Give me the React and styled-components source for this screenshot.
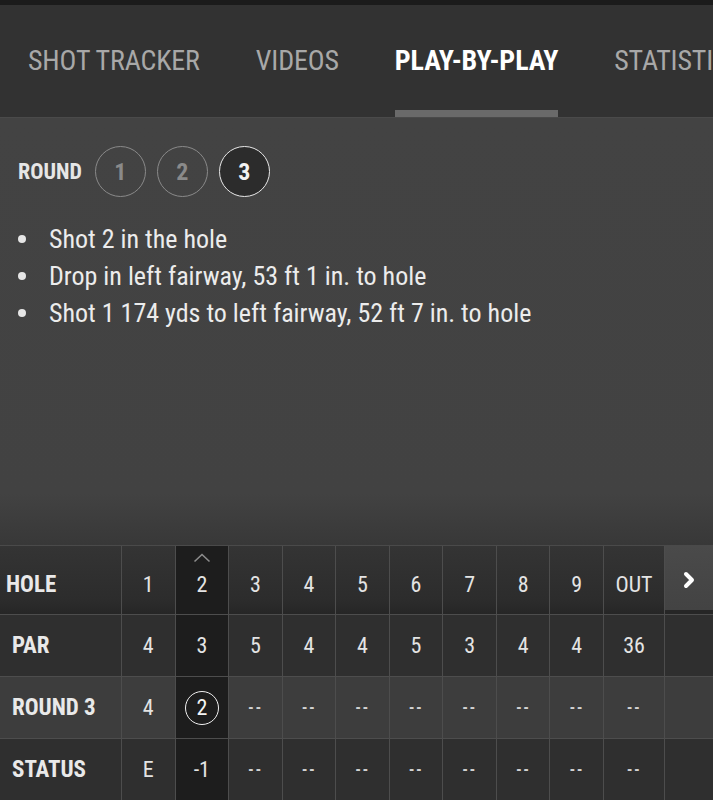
import React from 'react';
import styled, { createGlobalStyle } from 'styled-components';

const GlobalStyle = createGlobalStyle`
    body {
        margin: 0;
        background: #424242;
        font-family: "Roboto Condensed", Roboto, "Liberation Sans", sans-serif;
    }
`;

const Page = styled.div`
    width: 713px;
    height: 800px;
    display: flex;
    flex-direction: column;
    overflow: hidden;
`;

const TopStrip = styled.div`
    height: 5px;
    background: #1b1b1b;
`;

const TabBar = styled.div`
    height: 112px;
    background: #323232;
    display: flex;
    gap: 56px;
    padding-left: 28px;
    white-space: nowrap;
    overflow: hidden;
`;

const Tab = styled.div`
    position: relative;
    display: flex;
    align-items: center;
    flex-shrink: 0;
    padding-bottom: 2px;
    font-size: 28px;
    font-weight: ${props => props.$active ? 700 : 400};
    color: ${props => props.$active ? '#ffffff' : '#a8a8a8'};
    letter-spacing: -0.15px;

    &::after {
        content: '';
        display: ${props => props.$active ? 'block' : 'none'};
        position: absolute;
        left: 0;
        right: 0;
        bottom: 0;
        height: 7px;
        background: #6a6a6a;
    }
`;

const Content = styled.div`
    flex: 1;
    border-top: 1px solid #4a4a4a;
    background: linear-gradient(#434343 0%, #424242 88%, #383838 100%);
    padding: 28px 18px 0;
`;

const RoundRow = styled.div`
    display: flex;
    align-items: center;
    gap: 11px;
`;

const RoundLabel = styled.div`
    font-size: 22px;
    font-weight: 700;
    color: #e6e6e6;
    margin-right: 2px;
`;

const RoundButton = styled.div`
    width: 49px;
    height: 49px;
    border-radius: 50%;
    display: flex;
    align-items: center;
    justify-content: center;
    font-size: 24px;
    font-weight: 700;
    border: 1.5px solid ${props => props.$active ? '#e8e8e8' : '#8a8a8a'};
    color: ${props => props.$active ? '#f2f2f2' : '#8a8a8a'};
    background: ${props => props.$active ? '#2c2c2c' : 'transparent'};
`;

const ShotList = styled.ul`
    list-style: none;
    margin: 23px 0 0;
    padding: 0;
`;

const Shot = styled.li`
    display: flex;
    align-items: center;
    height: 37px;
    font-size: 26px;
    color: #ececec;

    &::before {
        content: '';
        width: 8px;
        height: 8px;
        border-radius: 50%;
        background: #e6e6e6;
        margin: 0 23px 0 0;
        flex-shrink: 0;
    }
`;

const Table = styled.div`
    display: grid;
    grid-template-columns: 121px repeat(9, 1fr) 60px 48px;
    grid-template-rows: 68px 61px 61px 61px;
    gap: 1px;
    background: #4d4d4d;
    border-top: 1px solid #4a4a4a;
`;

const rowBg = {
    head: 'linear-gradient(#343434, #2c2c2c 80%, #262626)',
    par: '#2f2f2f',
    round: '#3d3d3d',
    status: '#2f2f2f',
};

const Cell = styled.div`
    position: relative;
    display: flex;
    align-items: center;
    justify-content: ${props => props.$label ? 'flex-start' : 'center'};
    padding-left: ${props => props.$label ? (props.$indent ? '12px' : '6px') : '0'};
    padding-top: ${props => props.$head ? '8px' : '0'};
    background: ${props => props.$hl ? '#1d1d1d' : rowBg[props.$row]};
    color: ${props => props.$label ? '#e9e9e9' : props.$small ? '#d2d2d2' : '#e4e4e4'};
    font-size: ${props => props.$small ? '16px' : props.$label ? '23px' : '22px'};
    font-weight: ${props => props.$label || props.$small ? 700 : 400};
    letter-spacing: ${props => props.$small ? '1.5px' : '0'};
`;

const Caret = styled.svg`
    position: absolute;
    top: 7px;
    left: 50%;
    transform: translateX(-50%);
`;

const Circled = styled.div`
    width: 32px;
    height: 32px;
    border: 1.5px solid #f0f0f0;
    border-radius: 50%;
    display: flex;
    align-items: center;
    justify-content: center;
    color: #f4f4f4;
`;

const NextButton = styled.div`
    display: flex;
    align-items: center;
    justify-content: center;
    background: linear-gradient(#4a4a4a, #434343);
    border-bottom: 4px solid #262626;
    padding-top: 4px;
`;

const EmptyCell = styled.div`
    background: ${props => rowBg[props.$row]};
`;

const holes = ['1', '2', '3', '4', '5', '6', '7', '8', '9', 'OUT'];
const par = ['4', '3', '5', '4', '4', '5', '3', '4', '4', '36'];
const round3 = ['4', '2', '--', '--', '--', '--', '--', '--', '--', '--'];
const status = ['E', '-1', '--', '--', '--', '--', '--', '--', '--', '--'];

const shots = [
    'Shot 2 in the hole',
    'Drop in left fairway, 53 ft 1 in. to hole',
    'Shot 1 174 yds to left fairway, 52 ft 7 in. to hole',
];

const current = 1;

const DataRow = ({ row, label, values, indent }) => (
    <>
        <Cell $row={row} $label $indent={indent}>{label}</Cell>
        {values.map((v, i) => (
            <Cell key={i} $row={row} $hl={i === current} $small={v === '--'}>
                {row === 'round' && i === current ? <Circled>{v}</Circled> : v}
            </Cell>
        ))}
        <EmptyCell $row={row} />
    </>
);

export default function App() {
    return (
        <Page>
            <GlobalStyle />
            <TopStrip />
            <TabBar>
                <Tab>SHOT TRACKER</Tab>
                <Tab>VIDEOS</Tab>
                <Tab $active>PLAY-BY-PLAY</Tab>
                <Tab>STATISTICS</Tab>
            </TabBar>
            <Content>
                <RoundRow>
                    <RoundLabel>ROUND</RoundLabel>
                    <RoundButton>1</RoundButton>
                    <RoundButton>2</RoundButton>
                    <RoundButton $active>3</RoundButton>
                </RoundRow>
                <ShotList>
                    {shots.map(s => <Shot key={s}>{s}</Shot>)}
                </ShotList>
            </Content>
            <Table>
                <Cell $row="head" $label $head>HOLE</Cell>
                {holes.map((h, i) => (
                    <Cell key={h} $row="head" $head $hl={i === current}>
                        {i === current && (
                            <Caret width="18" height="10" viewBox="0 0 18 10">
                                <path d="M1.5 8.5 L9 1.5 L16.5 8.5" fill="none" stroke="#8c8c8c" strokeWidth="1.6" />
                            </Caret>
                        )}
                        {h}
                    </Cell>
                ))}
                <NextButton>
                    <svg width="14" height="20" viewBox="0 0 14 20">
                        <path d="M4 4 L10 10 L4 16" fill="none" stroke="#ffffff" strokeWidth="4" strokeLinecap="round" strokeLinejoin="round" />
                    </svg>
                </NextButton>
                <DataRow row="par" label="PAR" values={par} indent />
                <DataRow row="round" label="ROUND 3" values={round3} indent />
                <DataRow row="status" label="STATUS" values={status} indent />
            </Table>
        </Page>
    );
}
